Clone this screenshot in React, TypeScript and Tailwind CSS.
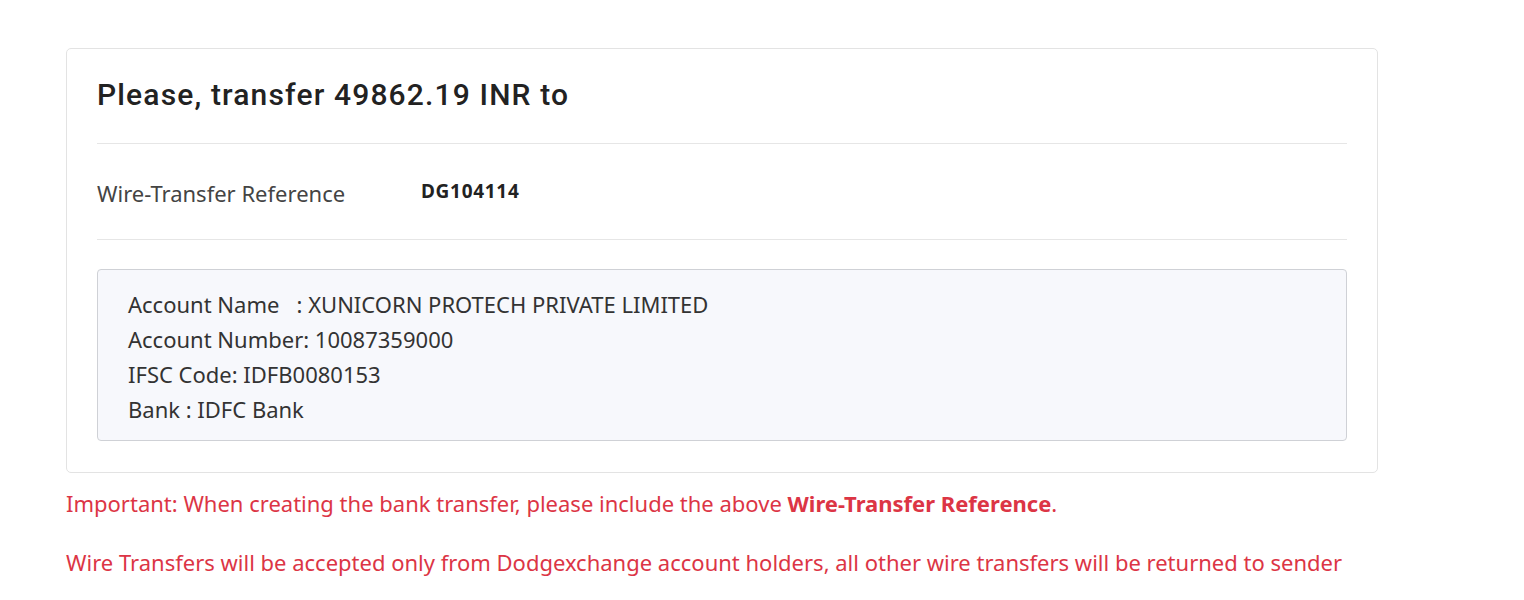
export default function App() {
  return (
    <div className="min-h-[600px] bg-white pl-[66px] pt-[48px] font-['Noto_Sans',sans-serif]">
      {/* transfer card */}
      <div className="w-[1312px] rounded-[5px] border border-[#e3e3e3] px-[30px] pb-[31px]">
        <div className="flex h-[95px] items-center border-b border-[#e6e6e6] pb-[3px]">
          <h2 className="font-['Roboto',sans-serif] text-[30px] font-medium tracking-[1.15px] text-[#222]">
            Please, transfer 49862.19 INR to
          </h2>
        </div>
        <div className="flex h-[96px] items-center border-b border-[#e6e6e6]">
          <span className="mt-[4px] w-[324px] text-[22px] text-[#444]">
            Wire-Transfer Reference
          </span>
          <span className="text-[19px] font-bold tracking-[0.7px] text-[#222]">DG104114</span>
        </div>
        <div className="mt-[29px] h-[172px] rounded-[4px] border border-[#cfd1d6] bg-[#f7f8fc] px-[30px] pt-[17px] text-[22px] leading-[35px] text-[#333]">
          <div>Account Name&nbsp;&nbsp;&nbsp;: XUNICORN PROTECH PRIVATE LIMITED</div>
          <div>Account Number: 10087359000</div>
          <div>IFSC Code: IDFB0080153</div>
          <div>Bank : IDFC Bank</div>
        </div>
      </div>
      <p className="mt-[15px] text-[22px] leading-[30px] text-[#dc3545]">
        Important: When creating the bank transfer, please include the above{" "}
        <b>Wire-Transfer Reference</b>.
      </p>
      <p className="mt-[29px] text-[22px] leading-[30px] text-[#dc3545]">
        Wire Transfers will be accepted only from Dodgexchange account holders, all other wire transfers will be returned to sender
      </p>
    </div>
  );
}
